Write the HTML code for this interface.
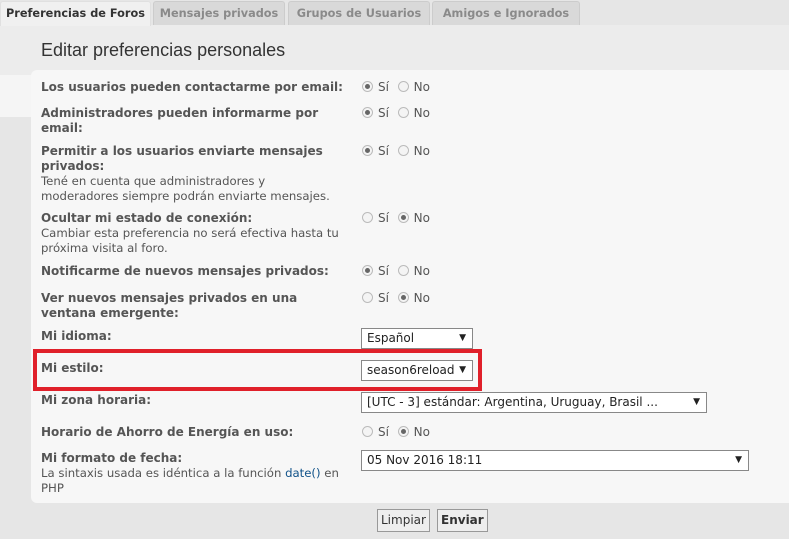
<!DOCTYPE html>
<html><head><meta charset="utf-8"><style>
*{margin:0;padding:0;box-sizing:border-box}
body{width:789px;height:539px;background:#e6e6e6;font-family:"DejaVu Sans",Verdana,sans-serif;font-size:12px;color:#555;position:relative;overflow:hidden}
.tab{position:absolute;top:1px;height:24px;background:#d9d9d9;border:1px solid #ccc;border-bottom:none;border-radius:3px 3px 0 0;font-weight:bold;font-size:11.3px;color:#8a8a8a;line-height:23px;text-align:center}
.tab.act{background:#f0f0f0;color:#333;height:25px;border-color:#e0e0e0}
.hdr{position:absolute;left:0;top:25px;width:789px;height:50px;background:#ececec}
h1{position:absolute;left:41px;top:40px;font-family:"Liberation Sans",Arial,sans-serif;font-weight:normal;font-size:18px;color:#333}
.strip{position:absolute;left:0;top:75px;width:31px;height:42px;background:#f5f5f5}
.panel{position:absolute;left:31px;top:70px;width:758px;height:433px;background:#f7f7f7;border-radius:6px 0 0 6px}
.l{position:absolute;left:41px;line-height:15px;width:305px}
.l b{color:#555;font-size:12px}
.l span{color:#555;font-size:11.7px}
.r{position:absolute;left:361px;line-height:15px;color:#555}
.rd{display:inline-block;width:11px;height:11px;border-radius:50%;border:1px solid #bbb;background:#f4f4f4;vertical-align:-1px;position:relative;margin:0 5px 0 1px}
.rd.on::after{content:"";position:absolute;left:2px;top:2px;width:5px;height:5px;border-radius:50%;background:#666}
.sel{position:absolute;left:361px;height:21px;border:1px solid #888;background:#fff;color:#222;font-size:12px;line-height:19px;padding-left:5px}
.sel::after{content:"▼";position:absolute;right:6px;top:0;font-size:9px}
.btn{position:absolute;top:509px;height:23px;border:1px solid #999;background:#eee;line-height:21px;font-size:12px;color:#333;padding:0 3px}
</style></head><body>
<div class="hdr"></div>
<div class="tab act" style="left:0;width:151px">Preferencias de Foros</div>
<div class="tab" style="left:153px;width:132px">Mensajes privados</div>
<div class="tab" style="left:288px;width:142px">Grupos de Usuarios</div>
<div class="tab" style="left:432px;width:148px">Amigos e Ignorados</div>
<h1>Editar preferencias personales</h1>
<div class="strip"></div>
<div class="panel"></div>

<div class="l" style="top:80px"><b>Los usuarios pueden contactarme por email:</b></div>
<div class="r" style="top:80px"><i class="rd on"></i>Sí &nbsp;<i class="rd"></i>No</div>

<div class="l" style="top:106px"><b>Administradores pueden informarme por email:</b></div>
<div class="r" style="top:106px"><i class="rd on"></i>Sí &nbsp;<i class="rd"></i>No</div>

<div class="l" style="top:144px"><b>Permitir a los usuarios enviarte mensajes privados:</b><br><span>Tené en cuenta que administradores y<br>moderadores siempre podrán enviarte mensajes.</span></div>
<div class="r" style="top:144px"><i class="rd on"></i>Sí &nbsp;<i class="rd"></i>No</div>

<div class="l" style="top:211px"><b>Ocultar mi estado de conexión:</b><br><span>Cambiar esta preferencia no será efectiva hasta tu<br>próxima visita al foro.</span></div>
<div class="r" style="top:211px"><i class="rd"></i>Sí &nbsp;<i class="rd on"></i>No</div>

<div class="l" style="top:264px"><b>Notificarme de nuevos mensajes privados:</b></div>
<div class="r" style="top:264px"><i class="rd on"></i>Sí &nbsp;<i class="rd"></i>No</div>

<div class="l" style="top:291px"><b>Ver nuevos mensajes privados en una ventana emergente:</b></div>
<div class="r" style="top:291px"><i class="rd"></i>Sí &nbsp;<i class="rd on"></i>No</div>

<div class="l" style="top:329px"><b>Mi idioma:</b></div>
<div class="sel" style="top:328px;width:112px">Español</div>

<div style="position:absolute;left:33px;top:349px;width:449px;height:42px;border:4px solid #e0202a"></div>
<div class="l" style="top:361px"><b>Mi estilo:</b></div>
<div class="sel" style="top:360px;width:112px">season6reload</div>

<div class="l" style="top:393px"><b>Mi zona horaria:</b></div>
<div class="sel" style="top:392px;width:346px">[UTC - 3] estándar: Argentina, Uruguay, Brasil ...</div>

<div class="l" style="top:425px"><b>Horario de Ahorro de Energía en uso:</b></div>
<div class="r" style="top:425px"><i class="rd"></i>Sí &nbsp;<i class="rd on"></i>No</div>

<div class="l" style="top:451px"><b>Mi formato de fecha:</b><br><span>La sintaxis usada es idéntica a la función <span style="color:#105289">date()</span> en<br>PHP</span></div>
<div class="sel" style="top:450px;width:388px">05 Nov 2016 18:11</div>

<div class="btn" style="left:377px">Limpiar</div>
<div class="btn" style="left:437px;font-weight:bold">Enviar</div>
</body></html>
